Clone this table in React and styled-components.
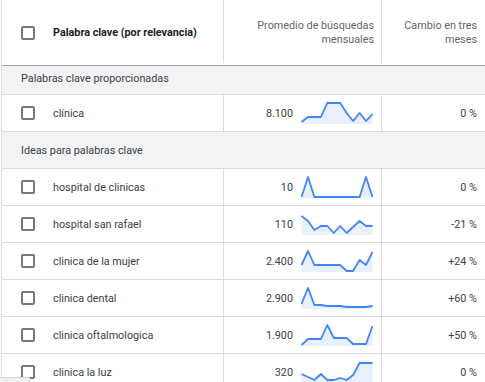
import React from "react";
import styled, { createGlobalStyle } from "styled-components";

const GlobalStyle = createGlobalStyle`
  html, body {
    margin: 0;
    padding: 0;
    background: #ffffff;
    overflow: hidden;
  }
  body {
    font-family: Roboto, "Noto Sans", Arial, sans-serif;
    font-size: 10.8px;
    color: #3c4043;
  }
`;

const Page = styled.div`
  position: relative;
  width: 485px;
  height: 382px;
  overflow: hidden;
`;

const Table = styled.div`
  margin-left: 1px;
  width: 484px;
  border-left: 1px solid #dadce0;
  display: grid;
  grid-template-columns: 222px 158px 103px;
`;

const HeadCell = styled.div`
  position: relative;
  height: 65px;
  border-bottom: 1px solid #a3a7ab;
  display: flex;
  align-items: center;
  justify-content: ${(p) => (p.$right ? "flex-end" : "flex-start")};
  padding: ${(p) => (p.$right ? "0 8px 0 0" : "0 0 0 19px")};
  gap: 18px;
  text-align: right;
  line-height: 14px;
  color: #5f6368;

  &::after {
    content: "";
    display: ${(p) => (p.$last ? "none" : "block")};
    position: absolute;
    right: 0;
    top: 0;
    bottom: 2px;
    width: 1px;
    background: #dadce0;
  }
`;

const HeadTitle = styled.span`
  font-weight: 700;
  color: #202124;
`;

const Check = styled.span`
  box-sizing: border-box;
  width: 14px;
  height: 14px;
  flex: none;
  border: 2px solid #75797d;
  border-radius: 2px;
`;

const GroupRow = styled.div`
  grid-column: 1 / -1;
  height: ${(p) => p.$h}px;
  box-sizing: border-box;
  background: #f1f3f4;
  border-bottom: 1px solid #dadce0;
  display: flex;
  align-items: center;
  padding-left: 19px;
  padding-bottom: ${(p) => p.$lift || 0}px;
  color: #3c4043;
`;

const Cell = styled.div`
  height: 37px;
  box-sizing: border-box;
  border-bottom: 1px solid #dadce0;
  border-right: ${(p) => (p.$last ? "none" : "1px solid #dadce0")};
  display: flex;
  align-items: center;
  justify-content: ${(p) => (p.$right ? "flex-end" : "flex-start")};
  padding: ${(p) => (p.$right ? "0 8px 0 0" : "0 0 0 19px")};
  gap: ${(p) => (p.$right ? "8px" : "18px")};
  color: #3c4043;
`;

const Spark = styled.svg`
  display: block;
  width: 72px;
  height: 22px;
  flex: none;
`;

const ScrollThumb = styled.div`
  position: absolute;
  left: 0;
  bottom: 0;
  width: 29px;
  height: 4px;
  background: #eef0f2;
  border-top: 1px solid #d3d6d9;
  border-right: 1px solid #d3d6d9;
`;

const Sparkline = ({ values }) => {
  const step = 71 / (values.length - 1);
  const pts = values.map((v, i) => [0.5 + i * step, 1 + v]);
  const line = pts.map(([x, y]) => `${x.toFixed(1)},${y}`).join(" ");
  const area = `0.5,22 ${line} 71.5,22`;
  return (
    <Spark viewBox="0 0 72 22">
      <polygon points={area} fill="#e8f0fe" />
      <polyline
        points={line}
        fill="none"
        stroke="#4285f4"
        strokeWidth="1.8"
        strokeLinejoin="round"
      />
    </Spark>
  );
};

const provided = [
  { kw: "clínica", vol: "8.100", pct: "0 %", data: [19, 14, 14, 14, 0, 0, 0, 10, 18, 10, 18, 11] },
];

const ideas = [
  { kw: "hospital de clinicas", vol: "10", pct: "0 %", data: [20, 0, 20, 20, 20, 20, 20, 20, 20, 20, 0, 20] },
  { kw: "hospital san rafael", vol: "110", pct: "-21 %", data: [2, 7, 16, 12, 12, 19, 12, 19, 13, 7, 12, 12] },
  { kw: "clinica de la mujer", vol: "2.400", pct: "+24 %", data: [14, 0, 14, 14, 14, 14, 14, 20, 20, 9, 14, 1] },
  { kw: "clinica dental", vol: "2.900", pct: "+60 %", data: [16, 0, 17, 17, 18, 18, 18, 19, 19, 19, 19, 18] },
  { kw: "clinica oftalmologica", vol: "1.900", pct: "+50 %", data: [20, 14, 14, 14, 0, 13, 13, 13, 19, 19, 19, 1] },
  { kw: "clinica la luz", vol: "320", pct: "0 %", data: [12, 15, 18, 12, 18, 18, 16, 18, 13, 1, 1, 1] },
];

const KeywordRow = ({ row }) => (
  <>
    <Cell>
      <Check />
      <span>{row.kw}</span>
    </Cell>
    <Cell $right>
      <span>{row.vol}</span>
      <Sparkline values={row.data} />
    </Cell>
    <Cell $right $last>
      {row.pct}
    </Cell>
  </>
);

export default function App() {
  return (
    <Page>
      <GlobalStyle />
      <Table>
        <HeadCell>
          <Check />
          <HeadTitle>Palabra clave (por relevancia)</HeadTitle>
        </HeadCell>
        <HeadCell $right>
          Promedio de búsquedas
          <br />
          mensuales
        </HeadCell>
        <HeadCell $right $last>
          Cambio en tres
          <br />
          meses
        </HeadCell>

        <GroupRow $h={29} $lift={4}>Palabras clave proporcionadas</GroupRow>
        {provided.map((r) => (
          <KeywordRow key={r.kw} row={r} />
        ))}

        <GroupRow $h={37}>Ideas para palabras clave</GroupRow>
        {ideas.map((r) => (
          <KeywordRow key={r.kw} row={r} />
        ))}
      </Table>
      <ScrollThumb />
    </Page>
  );
}
